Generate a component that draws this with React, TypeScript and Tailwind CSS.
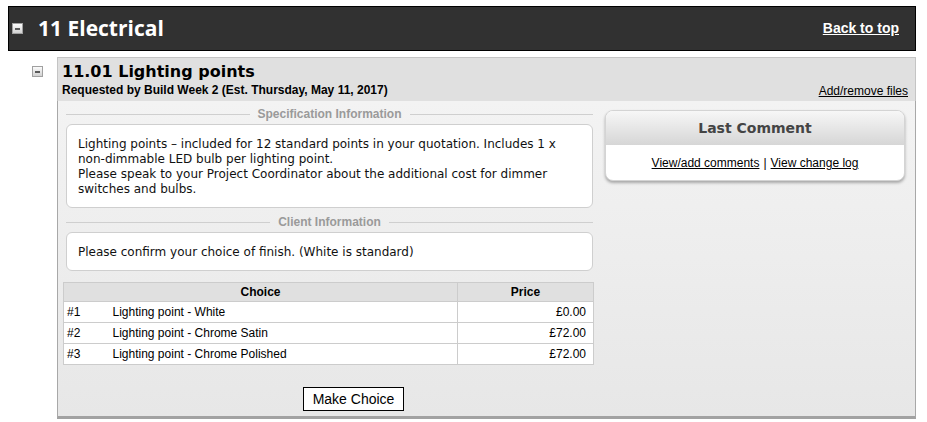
import React from 'react';

const choices = [
  { no: '#1', name: 'Lighting point - White', price: '£0.00' },
  { no: '#2', name: 'Lighting point - Chrome Satin', price: '£72.00' },
  { no: '#3', name: 'Lighting point - Chrome Polished', price: '£72.00' },
];

const MinusBox: React.FC<{ className?: string }> = ({ className = '' }) => (
  <span
    className={`flex items-center justify-center w-[11px] h-[11px] border border-[#a0a0a0] bg-gradient-to-b from-[#fbfbfb] to-[#d2d2d2] ${className}`}
  >
    <span className="block w-[5px] h-[2px] bg-[#5a5a5a]" />
  </span>
);

const Legend: React.FC<{ label: string }> = ({ label }) => (
  <div className="flex items-center gap-2 pl-[3px] h-[13px]">
    <div className="flex-1 h-px bg-[#cfcfcf]" />
    <span className="text-[12px] leading-[13px] font-bold text-[#9a9a9a]">{label}</span>
    <div className="flex-1 h-px bg-[#cfcfcf]" />
  </div>
);

export default function App() {
  return (
    <div className="w-[927px] h-[422px] bg-white overflow-hidden font-['Liberation_Sans',Arial,sans-serif] text-black">
      <div className="pl-2 pr-[11px] pt-[6px]">
        {/* section header */}
        <div className="flex items-center justify-between h-[45px] bg-[#313131] border border-black pl-[3px] pr-[16px]">
          <div className="flex items-center">
            <MinusBox />
            <span className="ml-[15px] text-white font-['Open_Sans',sans-serif] font-bold text-[21px] leading-none">
              11 Electrical
            </span>
          </div>
          <a href="#" className="text-white font-bold text-[14px] underline">
            Back to top
          </a>
        </div>

        {/* item */}
        <div className="flex mt-[6px]">
          <div className="w-[49px] shrink-0 pl-[24px] pt-[9px]">
            <MinusBox />
          </div>
          <div className="flex-1">
            <div className="h-[44px] bg-[#e0e0e0] border border-b-0 border-[#c4c4c4] pl-[4px] pr-[7px] pt-[4px] relative">
              <div className="font-['DejaVu_Sans',sans-serif] font-bold text-[16px] leading-[20px]">
                11.01 Lighting points
              </div>
              <div className="text-[12px] font-bold leading-[14px] mt-[1px]">
                Requested by Build Week 2 (Est. Thursday, May 11, 2017)
              </div>
              <a href="#" className="absolute right-[7px] bottom-[3px] text-[12px] underline leading-[14px]">
                Add/remove files
              </a>
            </div>

            <div className="h-[318px] border-l border-r border-[#a8a8a8] border-b-[3px] border-b-[#a2a2a2] bg-gradient-to-b from-[#f3f3f3] to-[#e7e7e7] flex pl-[5px] pt-[7px]">
              {/* left column */}
              <div className="w-[530px] shrink-0">
                <Legend label="Specification Information" />
                <div className="ml-[3px] mt-[3px] h-[84px] bg-white border border-[#cfcfcf] rounded-[6px] pl-[11px] pr-[8px] pt-[12px] font-['DejaVu_Sans',sans-serif] text-[12px] leading-[15px] text-[#111]">
                  Lighting points – included for 12 standard points in your quotation. Includes 1 x
                  <br />
                  non-dimmable LED bulb per lighting point.
                  <br />
                  Please speak to your Project Coordinator about the additional cost for dimmer
                  <br />
                  switches and bulbs.
                </div>

                <div className="mt-[8px]">
                  <Legend label="Client Information" />
                </div>
                <div className="ml-[3px] mt-[3px] h-[39px] bg-white border border-[#cfcfcf] rounded-[6px] pl-[11px] flex items-center font-['DejaVu_Sans',sans-serif] text-[12px] text-[#111]">
                  Please confirm your choice of finish. (White is standard)
                </div>

                <table className="mt-[11px] w-[530px] table-fixed border-collapse text-[12px] bg-white">
                  <colgroup>
                    <col className="w-[49px]" />
                    <col className="w-[345px]" />
                    <col className="w-[136px]" />
                  </colgroup>
                  <thead>
                    <tr className="bg-[#e0e0e0] h-[19px]">
                      <th colSpan={2} className="border border-[#cccccc] font-bold">
                        Choice
                      </th>
                      <th className="border border-[#cccccc] font-bold">Price</th>
                    </tr>
                  </thead>
                  <tbody>
                    {choices.map((c) => (
                      <tr key={c.no} className="h-[21px]">
                        <td className="border-y border-l border-[#cccccc] pl-[3px]">{c.no}</td>
                        <td className="border-y border-r border-[#cccccc]">{c.name}</td>
                        <td className="border border-[#cccccc] text-right pr-[7px]">{c.price}</td>
                      </tr>
                    ))}
                  </tbody>
                </table>

                <div className="mt-[22px] pl-[240px]">
                  <button
                    type="button"
                    className="h-[24px] w-[101px] border border-black bg-white text-[14px] leading-none"
                  >
                    Make Choice
                  </button>
                </div>
              </div>

              {/* right column */}
              <div className="ml-[12px] mt-[2px] w-[300px] h-[71px] rounded-[8px] border border-[#d4d4d4] bg-white shadow-[0_2px_3px_rgba(0,0,0,0.3)] overflow-hidden">
                <div className="h-[34px] bg-gradient-to-b from-[#f7f7f7] to-[#d6d6d6] flex items-center justify-center font-['DejaVu_Sans',sans-serif] font-bold text-[14px] text-[#444]">
                  Last Comment
                </div>
                <div className="flex items-center justify-center h-[36px] text-[12px]">
                  <a href="#" className="underline">View/add comments</a>
                  <span className="mx-[4px]">|</span>
                  <a href="#" className="underline">View change log</a>
                </div>
              </div>
            </div>
          </div>
        </div>
      </div>
    </div>
  );
}
